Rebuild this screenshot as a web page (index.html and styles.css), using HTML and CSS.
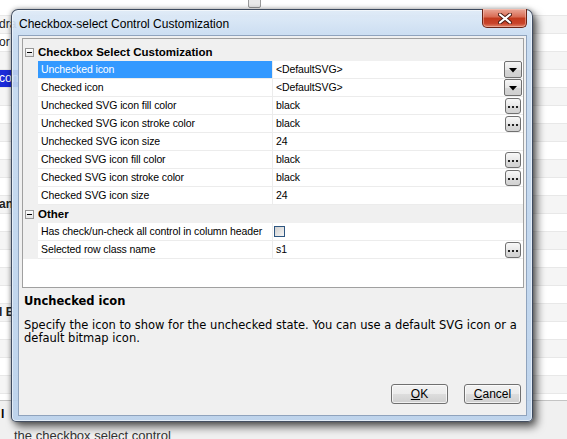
FILE: index.html
```html
<!DOCTYPE html>
<html lang="en">
<head>
    <meta charset="UTF-8">
    <title>Checkbox-select Control Customization</title>
    <link rel="stylesheet" href="styles.css">
</head>
<body>
<div class="desktop">

    <!-- application behind the dialog -->
    <div class="bg-list">
        <div class="bg-row"></div>
        <div class="bg-row"><span class="cut">dra</span></div>
        <div class="bg-row"><span class="cut">or</span></div>
        <div class="bg-row"></div>
        <div class="bg-row"><span class="cut sel">con</span></div>
        <div class="bg-row"></div>
        <div class="bg-row"></div>
        <div class="bg-row"></div>
        <div class="bg-row"></div>
        <div class="bg-row"></div>
        <div class="bg-row"></div>
        <div class="bg-row"><span class="cut bold">an</span></div>
        <div class="bg-row"></div>
        <div class="bg-row"></div>
        <div class="bg-row"></div>
        <div class="bg-row"></div>
        <div class="bg-row"></div>
        <div class="bg-row"><span class="cut bold">l E</span></div>
        <div class="bg-row"></div>
        <div class="bg-row"></div>
        <div class="bg-row"></div>
        <div class="bg-row"></div>
        <div class="bg-row"></div>
    </div>
    <div class="bg-foot">
        <div class="foot-title">l</div>
        <div class="foot-text">the checkbox select control</div>
    </div>
    <div class="bg-tab"></div>

    <!-- dialog window -->
    <div class="dialog">
        <div class="titlebar">
            <span class="title">Checkbox-select Control Customization</span>
            <button class="close" title="Close">
                <svg width="14" height="11" viewBox="0 0 14 11">
                    <path d="M2 1.5 L12 9.5 M12 1.5 L2 9.5" stroke="#4a1a12" stroke-width="4" stroke-linecap="round"/>
                    <path d="M2 1.5 L12 9.5 M12 1.5 L2 9.5" stroke="#fff" stroke-width="2.2" stroke-linecap="round"/>
                </svg>
            </button>
        </div>

        <div class="client">
            <div class="grid">
                <div class="grid-top"></div>

                <div class="cat"><span class="toggle"></span>Checkbox Select Customization</div>

                <div class="prop selected">
                    <div class="gutter"></div>
                    <div class="label">Unchecked icon</div>
                    <div class="value">&lt;DefaultSVG&gt;<span class="drop"><svg width="8" height="5" viewBox="0 0 8 5"><path d="M0 0 H8 L4 4.5 Z" fill="#000"/></svg></span></div>
                </div>
                <div class="prop">
                    <div class="gutter"></div>
                    <div class="label">Checked icon</div>
                    <div class="value">&lt;DefaultSVG&gt;<span class="drop"><svg width="8" height="5" viewBox="0 0 8 5"><path d="M0 0 H8 L4 4.5 Z" fill="#000"/></svg></span></div>
                </div>
                <div class="prop">
                    <div class="gutter"></div>
                    <div class="label">Unchecked SVG icon fill color</div>
                    <div class="value">black<span class="more"><svg width="10" height="3" viewBox="0 0 10 3"><path d="M0 0h2v2H0zM4 0h2v2H4zM8 0h2v2H8z" fill="#222"/></svg></span></div>
                </div>
                <div class="prop">
                    <div class="gutter"></div>
                    <div class="label">Unchecked SVG icon stroke color</div>
                    <div class="value">black<span class="more"><svg width="10" height="3" viewBox="0 0 10 3"><path d="M0 0h2v2H0zM4 0h2v2H4zM8 0h2v2H8z" fill="#222"/></svg></span></div>
                </div>
                <div class="prop">
                    <div class="gutter"></div>
                    <div class="label">Unchecked SVG icon size</div>
                    <div class="value">24</div>
                </div>
                <div class="prop">
                    <div class="gutter"></div>
                    <div class="label">Checked SVG icon fill color</div>
                    <div class="value">black<span class="more"><svg width="10" height="3" viewBox="0 0 10 3"><path d="M0 0h2v2H0zM4 0h2v2H4zM8 0h2v2H8z" fill="#222"/></svg></span></div>
                </div>
                <div class="prop">
                    <div class="gutter"></div>
                    <div class="label">Checked SVG icon stroke color</div>
                    <div class="value">black<span class="more"><svg width="10" height="3" viewBox="0 0 10 3"><path d="M0 0h2v2H0zM4 0h2v2H4zM8 0h2v2H8z" fill="#222"/></svg></span></div>
                </div>
                <div class="prop">
                    <div class="gutter"></div>
                    <div class="label">Checked SVG icon size</div>
                    <div class="value">24</div>
                </div>

                <div class="cat"><span class="toggle"></span>Other</div>

                <div class="prop">
                    <div class="gutter"></div>
                    <div class="label">Has check/un-check all control in column header</div>
                    <div class="value"><span class="check"></span></div>
                </div>
                <div class="prop">
                    <div class="gutter"></div>
                    <div class="label">Selected row class name</div>
                    <div class="value">s1<span class="more"><svg width="10" height="3" viewBox="0 0 10 3"><path d="M0 0h2v2H0zM4 0h2v2H4zM8 0h2v2H8z" fill="#222"/></svg></span></div>
                </div>
            </div>

            <div class="help">
                <div class="help-title">Unchecked icon</div>
                <p>Specify the icon to show for the unchecked state. You can use a default SVG icon or a default bitmap icon.</p>
            </div>

            <div class="actions">
                <button class="btn"><u>O</u>K</button>
                <button class="btn"><u>C</u>ancel</button>
            </div>
        </div>
    </div>

</div>
</body>
</html>
```

FILE: styles.css
```css
/* janela de propriedades estilo Windows 7 */
* { box-sizing: border-box; }
body { margin: 0; width: 567px; height: 439px; overflow: hidden; background: #fff; font-family: "Liberation Sans", Arial, sans-serif; }
.desktop { position: relative; width: 567px; height: 439px; overflow: hidden; }

/* fundo: aplicação atrás da janela */
.bg-list { display: flex; flex-direction: column; height: 402px; margin-top: -2px; overflow: hidden; }
.bg-row { flex: 0 0 18px; border-bottom: 1px solid #e8e8e8; font-size: 12px; line-height: 17px; color: #222; white-space: nowrap; }
.bg-row:nth-child(even) { background: #f5f5f5; }
.bg-row .cut { display: inline-block; margin-left: -1px; }
.bg-row .sel { background: #1b2bd8; color: #fff; height: 17px; width: 20px; }
.bg-row .bold { font-weight: bold; }
.bg-foot { height: 39px; border-top: 1px solid #c4c4c4; background: #f0f0f0; }
.foot-title { font: bold 12px/16px "Liberation Sans", sans-serif; margin: 5px 0 0 1px; }
.foot-text { font: 13px/16px "Liberation Sans", sans-serif; color: #333; margin: 6px 0 0 14px; }
.bg-tab { position: absolute; left: 248px; top: -3px; width: 13px; height: 11px; border: 1px solid #9a9a9a; border-radius: 2px; background: #e9e9e9; }

/* janela */
.dialog { position: absolute; left: 11px; top: 9px; width: 522px; height: 413px; display: flex; flex-direction: column; padding: 0 5px 5px 6px; border: 1px solid rgba(30, 40, 60, .8); border-radius: 7px 7px 5px 5px; background: linear-gradient(rgba(222, 234, 247, .93), rgba(196, 217, 240, .92) 30px, rgba(186, 209, 235, .92)); box-shadow: inset 0 0 0 1px rgba(255, 255, 255, .55), 4px 5px 9px rgba(0, 0, 0, .6), 0 0 5px rgba(0, 0, 0, .35); }
.titlebar { height: 25px; flex: 0 0 25px; display: flex; justify-content: space-between; align-items: flex-start; }
.title { margin: 6px 0 0 1px; font: 12px/16px "Liberation Sans", Arial, sans-serif; color: #000; }
.close { width: 45px; height: 19px; margin: -1px 0 0 0; padding: 0; border: 1px solid #6b2315; border-top: none; border-radius: 0 0 5px 5px; background: linear-gradient(#eaa898, #d86a52 45%, #c23a1d 50%, #c9432a 80%, #e0866a); box-shadow: inset 0 0 0 1px rgba(255, 210, 200, .45); display: flex; align-items: center; justify-content: center; }

.client { flex: 1; display: flex; flex-direction: column; background: #f0f0f0; border: 1px solid #8fa3bd; }

/* grade de propriedades */
.grid { height: 250px; margin: 2px 2px 0 3px; border: 1px solid #a0a0a0; background: #fff; font-size: 10.5px; letter-spacing: -0.1px; color: #000; }
.grid-top { height: 4px; background: #f0f0f0; }
.cat { height: 18px; display: flex; align-items: center; background: #f0f0f0; font-weight: bold; font-size: 11.5px; letter-spacing: 0; }
.toggle { width: 9px; height: 9px; margin: 0 4px 0 2px; border: 1px solid #969696; background: linear-gradient(#fff, #e4e4e4); position: relative; }
.toggle::after { content: ""; position: absolute; left: 1px; top: 3px; width: 5px; height: 1px; background: #000; }
.prop { display: grid; grid-template-columns: 15px 234px 1fr; height: 18px; }
.gutter { background: #f0f0f0; }
.label { padding-left: 3px; line-height: 17px; border-bottom: 1px solid #ececec; white-space: nowrap; overflow: hidden; }
.prop.selected .label { background: #3399ff; color: #fff; }
.value { display: flex; align-items: center; padding-left: 3px; border-bottom: 1px solid #ececec; border-left: 1px solid #ececec; line-height: 17px; }
.drop { margin-left: auto; margin-right: 1px; width: 18px; height: 17px; border: 1px solid #707070; border-radius: 2px; background: linear-gradient(#f6f6f6, #e6e6e6 50%, #d6d6d6 51%, #cfcfcf); display: flex; align-items: center; justify-content: center; padding-top: 2px; }
.more { margin-left: auto; margin-right: 2px; width: 16px; height: 16px; border: 1px solid #707070; border-radius: 3px; background: linear-gradient(#f8f8f8, #e8e8e8 50%, #dcdcdc 51%, #d2d2d2); display: flex; align-items: center; justify-content: center; padding-top: 4px; }
.check { width: 11px; height: 11px; margin-left: -2px; border: 1px solid #2d5580; background: linear-gradient(135deg, #cfcfcf, #f4f4f4); }

/* descrição */
.help { flex: 1; padding: 7px 3px 0 5px; font-family: "DejaVu Sans", Verdana, sans-serif; font-size: 11.5px; line-height: 13px; color: #000; }
.help-title { font-weight: bold; }
.help p { margin: 11px 0 0; }

/* botões */
.actions { display: flex; justify-content: flex-end; gap: 16px; padding: 0 5px 11px 0; }
.btn { width: 57px; height: 20px; padding: 0; border: 1px solid #707070; border-radius: 3px; background: linear-gradient(#f2f2f2, #ebebeb 50%, #dddddd 51%, #cfcfcf); box-shadow: inset 0 0 0 1px rgba(255, 255, 255, .7); font: 12px/16px "Liberation Sans", Arial, sans-serif; color: #000; }
```
